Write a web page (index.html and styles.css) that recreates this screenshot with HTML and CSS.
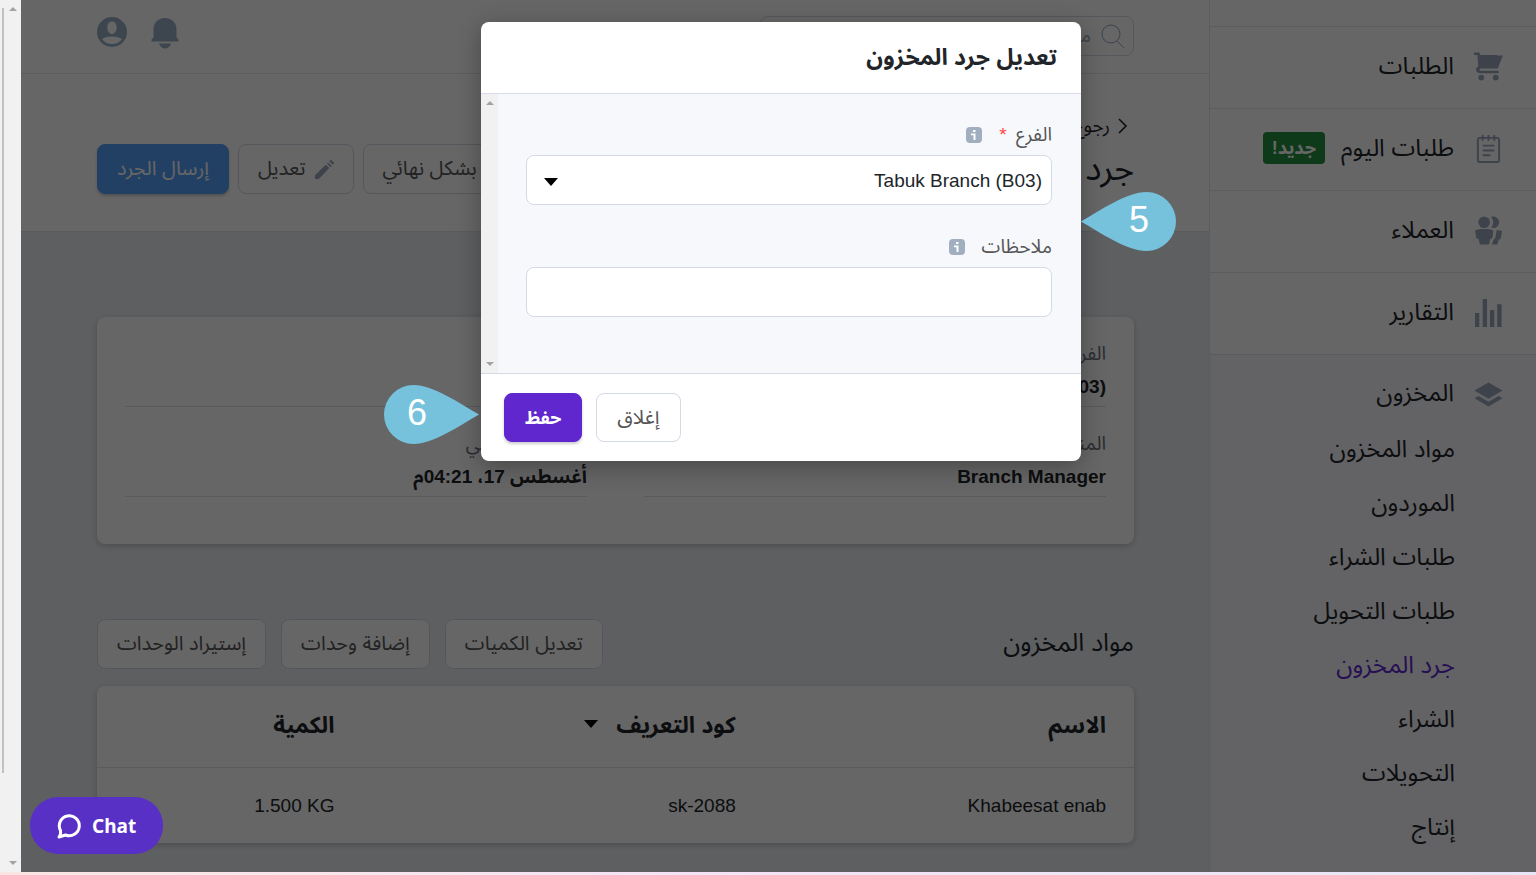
FILE: index.html
```html
<!DOCTYPE html>
<html lang="ar" dir="rtl">
<head>
    <meta charset="UTF-8">
    <meta name="viewport" content="width=device-width, initial-scale=1.0">
    <title>تعديل جرد المخزون</title>
    <link rel="stylesheet" href="styles.css">
</head>
<body>
    <div class="app">
        <nav class="sidebar">
            <div class="nav-spacer"></div>
            <a class="nav-item" href="#">
                <svg class="nav-icon" viewBox="0 0 30 30"><path d="M0 .5h5.500L7 3.500h23L24.500 17H7.500c-2.500 0-2.500 2.500 0 2.500H25.500V22H7C1.500 22 .5 16.500 4.500 15L3.500 4V3H0z"/><path d="M4 3h20v13H5z"/><circle cx="7.500" cy="26.500" r="3"/><circle cx="22.500" cy="26.500" r="3"/></svg>
                <span>الطلبات</span>
            </a>
            <a class="nav-item" href="#">
                <svg class="nav-icon" viewBox="0 0 30 30" fill="none" stroke="currentColor" stroke-width="2"><rect x="4" y="4" width="22" height="25" rx="2"/><path d="M9 1v6M15 1v6M21 1v6M9 12h12M9 17h12M9 22h8"/></svg>
                <span>طلبات اليوم</span>
                <span class="badge">جديد!</span>
            </a>
            <a class="nav-item" href="#">
                <svg class="nav-icon" viewBox="0 0 30 30"><circle cx="10.500" cy="6.500" r="6"/><path d="M17.500 1a6 6 0 1 1 0 11c3.200-3.500 3.200-7.500 0-11zM1 15c5-2 14-2 19 0l-1 8-2.500 1-.8 5.500H6L5 24l-2.500-1zM23.500 14.500l5.500 1-1.500 8-2 1-1.300 5H18.500l2-5.500 1.500-1z"/></svg>
                <span>العملاء</span>
            </a>
            <a class="nav-item" href="#">
                <svg class="nav-icon" viewBox="0 0 30 30"><path d="M1 15.500h4.500V30H1zM9 1h4.500v29H9zM16.500 12.500H21V30h-4.500zM24 6.500h4.500V30H24z"/></svg>
                <span>التقارير</span>
            </a>
            <div class="nav-group">
                <a class="nav-head" href="#">
                    <svg class="nav-icon" viewBox="0 0 30 30"><path d="M15 3.500L.5 12 15 20.500 29.500 12zM4.500 17.500L.5 20 15 28.500 29.500 20l-4-2.500L15 23.500z"/></svg>
                    <span>المخزون</span>
                </a>
                <ul class="subnav">
                    <li><a href="#">مواد المخزون</a></li>
                    <li><a href="#">الموردون</a></li>
                    <li><a href="#">طلبات الشراء</a></li>
                    <li><a href="#">طلبات التحويل</a></li>
                    <li><a class="active" href="#">جرد المخزون</a></li>
                    <li><a href="#">الشراء</a></li>
                    <li><a href="#">التحويلات</a></li>
                    <li><a href="#">إنتاج</a></li>
                </ul>
            </div>
        </nav>

        <main class="main">
            <header class="topbar">
                <div class="search">
                    <svg class="search-icon" viewBox="0 0 24 24" fill="none" stroke="currentColor"><circle cx="10" cy="10" r="9"/><path d="M16 17l7 7"/></svg>
                    <input type="text" aria-label="بحث" placeholder="ما الذي تبحث عنه؟">
                </div>
                <div class="topbar-icons">
                    <svg class="bell" viewBox="0 0 28 32"><path d="M14 1C7 1 2.500 6 2.500 12v8.500L.5 22.500v2h27v-2L25.500 20.500V12C25.500 6 21 1 14 1zM8 26.500h12c-1 3.500-3.500 5-6 5s-5-1.500-6-5z"/></svg>
                    <svg class="user" viewBox="0 0 30 30"><path fill-rule="evenodd" d="M15 0a15 15 0 1 0 0 30 15 15 0 0 0 0-30zM15 4.500c3 0 4.700 2.500 4.700 6s-1.700 6.500-4.700 6.500-4.700-3-4.700-6.500 1.700-6 4.700-6zM5 22c5-3.300 15-3.300 20 0-2 3.300-6 5-10 5S7 25.300 5 22z"/></svg>
                </div>
            </header>

            <section class="page-head">
                <div class="page-title">
                    <a class="back" href="#">
                        <svg viewBox="0 0 10 16" fill="none" stroke="currentColor" stroke-width="1.600"><path d="M1 1l7 7-7 7"/></svg>
                        رجوع
                    </a>
                    <h1>جرد المخزون</h1>
                </div>
                <div class="actions">
                    <button class="btn" type="button">حذف بشكل نهائي</button>
                    <button class="btn" type="button">
                        <svg class="pencil" viewBox="0 0 20 20"><path d="M0 16v4h4L15 8.500 11.300 5zM12.500 3.700l3.800 3.800 1.200-1.200-3.800-3.800zM15 1.300L18.700 5l1-1a1 1 0 0 0 0-1.400L17.400.3a1 1 0 0 0-1.400 0z"/></svg>
                        تعديل
                    </button>
                    <button class="btn btn-blue" type="button">إرسال الجرد</button>
                </div>
            </section>

            <section class="content">
                <dl class="card details">
                    <div><dt>الفرع</dt><dd><bdi>Tabuk Branch (B03)</bdi></dd></div>
                    <div><dt>الحالة</dt><dd>مسودة</dd></div>
                    <div><dt>المنشئ</dt><dd>Branch Manager</dd></div>
                    <div><dt>التاريخ التشغيلي</dt><dd>أغسطس 17، 04:21م</dd></div>
                </dl>

                <div class="items-head">
                    <h2>مواد المخزون</h2>
                    <div class="items-actions">
                        <button class="btn" type="button">تعديل الكميات</button>
                        <button class="btn" type="button">إضافة وحدات</button>
                        <button class="btn" type="button">إستيراد الوحدات</button>
                    </div>
                </div>

                <table class="card items">
                    <thead>
                        <tr>
                            <th class="col-name">الاسم</th>
                            <th class="col-code">كود التعريف <span class="caret"></span></th>
                            <th>الكمية</th>
                        </tr>
                    </thead>
                    <tbody>
                        <tr>
                            <td>Khabeesat enab</td>
                            <td><bdi>sk-2088</bdi></td>
                            <td><bdi>1.500 KG</bdi></td>
                        </tr>
                    </tbody>
                </table>
            </section>
        </main>

        <div class="overlay">
            <div class="modal" role="dialog" aria-labelledby="modal-title">
                <h3 class="modal-head" id="modal-title">تعديل جرد المخزون</h3>
                <div class="modal-body">
                    <form class="form">
                        <div class="label-row">
                            <label for="branch">الفرع <span class="required">*</span></label>
                            <svg class="info" viewBox="0 0 16 16"><rect width="16" height="16" rx="4"/><path fill="#fff" d="M7 3h2.500v2H7zM5 6.500h4.500V13H7.500V8.200H5z"/></svg>
                        </div>
                        <div class="select-wrap">
                            <select class="field" id="branch" dir="ltr">
                                <option>Tabuk Branch (B03)</option>
                            </select>
                            <span class="caret"></span>
                        </div>
                        <div class="label-row">
                            <label for="notes">ملاحظات</label>
                            <svg class="info" viewBox="0 0 16 16"><rect width="16" height="16" rx="4"/><path fill="#fff" d="M7 3h2.500v2H7zM5 6.500h4.500V13H7.500V8.200H5z"/></svg>
                        </div>
                        <input class="field" id="notes" type="text">
                    </form>
                    <div class="scrollbar modal-scroll"><i class="up"></i><i class="down"></i></div>
                </div>
                <div class="modal-foot">
                    <button class="btn" type="button">إغلاق</button>
                    <button class="btn btn-primary" type="button">حفظ</button>
                </div>
                <div class="callout callout-right">
                    <svg viewBox="0 0 95 59"><path d="M0 29.500C20 18 46 0 65.500 0a29.500 29.500 0 0 1 0 59C46 59 20 41 0 29.500z"/></svg>
                    <span>5</span>
                </div>
                <div class="callout callout-left">
                    <svg viewBox="0 0 95 59"><path d="M95 29.500C75 18 49 0 29.500 0a29.500 29.500 0 0 0 0 59C49 59 75 41 95 29.500z"/></svg>
                    <span>6</span>
                </div>
            </div>
        </div>

        <div class="scrollbar page-scroll"><i class="up"></i><i class="down"></i></div>

        <button class="chat" type="button" dir="ltr">
            <svg viewBox="0 0 26 26" fill="none" stroke="currentColor" stroke-width="3"><path d="M4.500 17.500A10 10 0 1 1 9.500 22L3 24q2-2 1.500-6.500z" stroke-linejoin="round"/></svg>
            Chat
        </button>
    </div>
</body>
</html>
```
FILE: styles.css
```css
* {
    box-sizing: border-box;
}
body {
    margin: 0;
    padding-bottom: 3px;
    height: 100vh;
    overflow: hidden;
    font-family: "Liberation Sans", "Noto Sans Arabic", "DejaVu Sans", sans-serif;
    font-size: 19px;
    color: #212529;
    background: linear-gradient(90deg, #fbe6e3, #f3e3f5 45%, #e6e6f8);
}
h1, h2, h3, ul, dl, dd {
    margin: 0;
    padding: 0;
    font-weight: normal;
}
a {
    color: inherit;
    text-decoration: none;
}
svg {
    display: block;
    fill: currentColor;
}
svg[fill="none"] {
    fill: none;
}
button, input, select {
    font: inherit;
    color: inherit;
}
.app {
    position: relative;
    display: flex;
    height: 100%;
    overflow: hidden;
}

/* sidebar */
.sidebar {
    width: 327px;
    flex-shrink: 0;
    display: flex;
    flex-direction: column;
    background: #fff;
    border-left: 1px solid #e2e6ee;
    font-size: 24px;
}
.nav-spacer {
    height: 27px;
    border-bottom: 1px solid #e2e6ee;
}
.nav-item, .nav-head {
    display: flex;
    align-items: center;
    padding: 0 33px 3px;
}
.nav-item {
    height: 82px;
    border-bottom: 1px solid #e2e6ee;
}
.nav-icon {
    width: 29px;
    height: 29px;
    margin-left: 20px;
    color: #98a5bb;
}
.badge {
    margin-right: 16px;
    padding: 0 9px;
    border-radius: 4px;
    background: #259141;
    color: #fff;
    font-size: 18px;
    font-weight: bold;
    line-height: 32px;
}
.nav-group {
    flex: 1;
    display: flex;
    flex-direction: column;
    padding: 12px 0 16px;
    background: #f7f8fc;
}
.nav-head {
    height: 56px;
}
.subnav {
    flex: 1;
    display: flex;
    flex-direction: column;
    padding-right: 81px;
    list-style: none;
}
.subnav li {
    flex: 1;
    display: flex;
    align-items: center;
    padding-bottom: 2px;
}
.subnav .active {
    color: #5f27cd;
}

/* top bar and page heading */
.main {
    flex: 1;
    display: flex;
    flex-direction: column;
    background: #ebeef3;
}
.topbar {
    display: flex;
    justify-content: space-between;
    height: 74px;
    padding: 16px 75px 16px 76px;
    background: #fff;
    border-bottom: 1px solid #e2e6ee;
}
.search {
    display: flex;
    align-items: center;
    width: 374px;
    height: 40px;
    padding: 0 8px;
    border: 1px solid #d4d9e6;
    border-radius: 8px;
    color: #98a5bb;
}
.search-icon {
    width: 24px;
    height: 24px;
}
.search input {
    flex: 1;
    min-width: 0;
    padding: 0 10px;
    border: 0;
    background: none;
}
.search input::placeholder {
    color: #98afc3;
}
.topbar-icons {
    display: flex;
    gap: 24px;
    padding-top: 1px;
    color: #98afc3;
}
.bell {
    width: 28px;
    height: 32px;
}
.user {
    width: 30px;
    height: 30px;
}
.page-head {
    display: flex;
    justify-content: space-between;
    height: 158px;
    padding: 40px 75px 0 76px;
    background: #fff;
    border-bottom: 1px solid #dde1ea;
}
.back {
    display: flex;
    align-items: center;
    gap: 8px;
    padding-right: 6px;
    line-height: 24px;
}
.back svg {
    width: 10px;
    height: 16px;
}
.page-title h1 {
    font-size: 34px;
    line-height: 60px;
}
.actions {
    display: flex;
    gap: 9px;
    padding-top: 30px;
}
.btn {
    display: flex;
    align-items: center;
    gap: 9px;
    height: 50px;
    padding: 0 19px;
    border: 1px solid #d4d9e6;
    border-radius: 8px;
    background: #fff;
    color: #555;
    font-size: 20px;
    white-space: nowrap;
}
.btn-blue {
    border-color: #56a0f8;
    background: #56a0f8;
    color: #fff;
    box-shadow: 0 2px 3px rgba(0, 0, 0, 0.2);
}
.btn-primary {
    border-color: #5f27cd;
    background: #5f27cd;
    color: #fff;
    font-size: 18px;
    font-weight: bold;
    box-shadow: 0 2px 3px rgba(0, 0, 0, 0.2);
}
.pencil {
    width: 19px;
    height: 19px;
    color: #98a5bb;
}

/* content */
.content {
    padding: 85px 75px 0 76px;
}
.card {
    background: #fff;
    border-radius: 8px;
    box-shadow: 0 2px 6px rgba(0, 0, 0, 0.2);
}
.details {
    display: grid;
    grid-template-columns: 1fr 1fr;
    column-gap: 57px;
    height: 227px;
    padding: 20px 28px 47px;
}
.details > div {
    padding-top: 2px;
    border-bottom: 1px solid #dde1ea;
}
.details > div:nth-child(n+3) {
    padding-top: 23px;
    margin-top: -1px;
}
.details dt {
    color: #69707d;
    line-height: 30px;
}
.details dd {
    font-weight: bold;
    line-height: 36px;
}
.items-head {
    display: flex;
    justify-content: space-between;
    align-items: center;
    padding: 75px 0 17px;
}
.items-head h2 {
    font-size: 25px;
    line-height: 44px;
    padding-bottom: 5px;
}
.items-actions {
    display: flex;
    gap: 15px;
}
.items {
    width: 100%;
    border-spacing: 0;
    table-layout: fixed;
}
.items th, .items td {
    padding: 0 28px;
    text-align: right;
}
.items th {
    height: 82px;
    padding-bottom: 2px;
    border-bottom: 1px solid #dde1ea;
    font-size: 23px;
}
.items td {
    height: 75px;
}
.col-name {
    width: 35.7%;
}
.col-code {
    width: 38.7%;
}
.caret {
    display: inline-block;
    border: 7px solid transparent;
    border-top: 8px solid #000;
    border-bottom: 0;
}
th .caret {
    margin-right: 12px;
    vertical-align: 5px;
}

/* modal */
.overlay {
    position: absolute;
    inset: 0 0 0 21px;
    padding-top: 22px;
    padding-left: 5px;
    background: rgba(0, 0, 0, 0.6);
}
.modal {
    position: relative;
    width: 600px;
    margin: 0 auto;
    background: #fff;
    border-radius: 8px;
    box-shadow: 0 6px 24px rgba(0, 0, 0, 0.3);
}
.modal-head {
    height: 72px;
    padding: 0 24px;
    border-bottom: 1px solid #d9dcea;
    font-size: 23px;
    font-weight: bold;
    line-height: 70px;
}
.modal-body {
    display: flex;
    height: 280px;
    border-bottom: 1px solid #d4d9e6;
    background: #f7f8fc;
}
.form {
    flex: 1;
    padding: 25px 29px 0 28px;
}
.label-row {
    display: flex;
    align-items: center;
    gap: 17px;
    height: 36px;
    padding-bottom: 4px;
    color: #555;
}
.required {
    margin-right: 4px;
    color: #f44;
}
.info {
    width: 16px;
    height: 16px;
    color: #a0aec0;
}
.field {
    display: block;
    width: 100%;
    height: 50px;
    padding: 0 9px;
    border: 1px solid #d4d9e6;
    border-radius: 8px;
    background: #fff;
    appearance: none;
}
.select-wrap {
    position: relative;
    margin-bottom: 26px;
}
.select-wrap .field {
    text-align: right;
    text-align-last: right;
}
.select-wrap .caret {
    position: absolute;
    left: 18px;
    top: 23px;
}
.modal-foot {
    display: flex;
    justify-content: flex-end;
    gap: 14px;
    padding: 19px 23px;
}
.modal-foot .btn {
    height: 49px;
    padding: 0 20px;
}
.callout {
    position: absolute;
    width: 95px;
    height: 59px;
    color: #76c2dc;
}
.callout span {
    position: absolute;
    top: 8px;
    color: #fff;
    font-size: 36px;
    line-height: 40px;
}
.callout-right {
    left: 600px;
    top: 170px;
}
.callout-right span {
    left: 48px;
}
.callout-left {
    right: 602px;
    top: 363px;
}
.callout-left span {
    left: 23px;
}

/* scroll bars */
.scrollbar {
    display: flex;
    flex-direction: column;
    justify-content: space-between;
    align-items: center;
    padding: 7px 0;
    background: #f1f1f1;
}
.scrollbar i {
    border: 4px solid transparent;
}
.scrollbar .up {
    border-top: 0;
    border-bottom-color: #a3a3a3;
}
.scrollbar .down {
    border-bottom: 0;
    border-top-color: #a3a3a3;
}
.modal-scroll {
    width: 17px;
}
.page-scroll {
    width: 21px;
    padding-left: 4px;
    background: linear-gradient(#c1c1c1, #c1c1c1) 2px 8px / 2px 765px no-repeat #f1f1f1;
}

.chat {
    position: absolute;
    left: 30px;
    bottom: 18px;
    display: flex;
    align-items: center;
    gap: 10px;
    height: 57px;
    padding: 0 27px 0 26px;
    border: 0;
    border-radius: 28px;
    background: #5930c5;
    color: #fff;
    font-family: "Noto Sans", sans-serif;
    font-weight: bold;
}
.chat svg {
    width: 26px;
    height: 26px;
}
```
